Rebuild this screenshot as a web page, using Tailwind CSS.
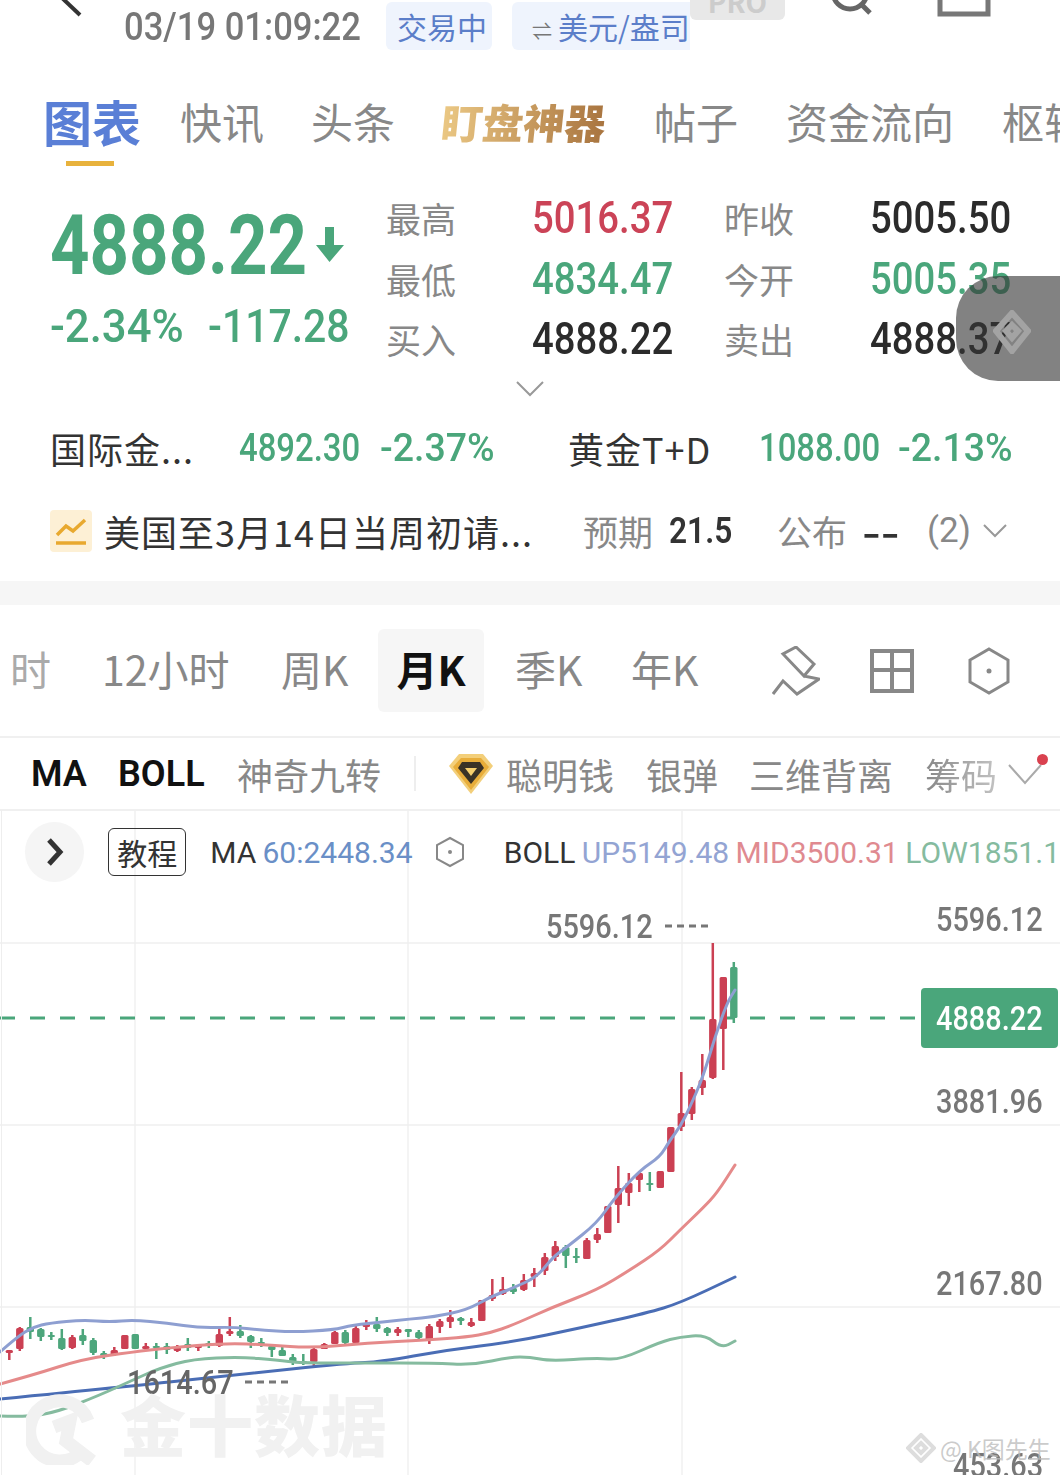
<!DOCTYPE html>
<html lang="zh-CN">
  <head>
    <meta charset="UTF-8" />
    <title>图表</title>
    <script src="https://cdn.jsdelivr.net/npm/@tailwindcss/browser@4"></script>
  </head>
  <body class="bg-white">
    <div class="relative w-[1060px] h-[1475px] overflow-hidden bg-white text-[#888] font-['Noto_Sans_CJK_SC','Noto_Sans',sans-serif]">
      <!-- Top bar -->
      <header class="relative h-[72px]">
        <svg class="absolute left-[50px] top-0" width="40" height="20" fill="none" stroke="#333" stroke-width="4"><path d="M10 -4 L30 15" /></svg>
        <div class="absolute left-[124px] top-[4px] w-[240px] h-[46px] leading-[46px] text-[38px] font-medium text-[#777] font-['Roboto',sans-serif]">
          <span class="inline-block origin-left whitespace-nowrap scale-x-[.91]">03/19 01:09:22</span>
        </div>
        <div class="absolute left-[386px] top-[2px] w-[106px] h-[48px] rounded-md bg-[#eff4fd] text-[#5b7ec9] text-[30px] leading-[48px] pl-[11px]">交易中</div>
        <div class="absolute left-[512px] top-[2px] w-[178px] h-[48px] rounded-l-md bg-[#eff4fd] text-[#5b7ec9] text-[30px] leading-[48px] whitespace-nowrap overflow-hidden pl-[20px]">
          <span class="text-[20px] mr-[6px] text-[#777]">⇌</span>美元/盎司
        </div>
        <div class="absolute left-[690px] top-0 w-[95px] h-[20px] rounded-b-md bg-[#e8e8e8] overflow-hidden text-center text-[#ccc] font-bold text-[28px] leading-[2px]">PRO</div>
        <svg class="absolute left-[820px] top-0" width="60" height="16" fill="none" stroke="#666" stroke-width="5"><circle cx="30" cy="-8" r="17" /><path d="M41 4 L50 13" /></svg>
        <svg class="absolute left-[936px] top-0" width="56" height="18" fill="none" stroke="#777" stroke-width="5"><path d="M4 0 V14 H52 V0" /></svg>
      </header>

      <!-- Tabs -->
      <nav class="relative h-[108px] flex items-start pl-[43px] pt-[16px] text-[42px] leading-[66px] whitespace-nowrap">
        <span class="text-[49px] font-bold text-[#5a7fd6] mr-[39px]">图表</span>
        <span class="mr-[47px]">快讯</span>
        <span class="mr-[47px]">头条</span>
        <span class="mr-[48px] w-[164px] font-black text-[41px] -skew-x-6 bg-linear-to-r from-[#ebc884] to-[#a8743f] bg-clip-text text-transparent">盯盘神器</span>
        <span class="mr-[48px]">帖子</span>
        <span class="mr-[48px]">资金流向</span>
        <span>枢轴</span>
        <i class="absolute left-[66px] top-[89px] w-[48px] h-[5px] bg-[#e8b23c]"></i>
      </nav>

      <!-- Quote -->
      <section class="relative h-[240px] flex pl-[50px]">
        <div class="w-[336px] text-[#4aa67b] font-['Roboto',sans-serif]">
          <div class="flex h-[100px] items-center pt-[32px] relative">
            <span class="inline-block origin-left whitespace-nowrap scale-x-[.82] text-[84px] leading-[100px] font-bold">4888.22</span>
            <svg class="absolute left-[265px] top-[47px]" width="30" height="36" fill="#4aa67b"><path d="M10 0 H19 V18 H29 L14.500 35 L1 18 H10 Z" /></svg>
          </div>
          <div class="flex h-[60px] items-center mt-[16px] text-[46px] font-medium whitespace-nowrap">
            <span class="inline-block w-[158px] origin-left scale-x-[.95]">-2.34%</span>
            <span class="inline-block origin-left scale-x-[.89]">-117.28</span>
          </div>
        </div>
        <div class="grid grid-cols-[146px_192px_146px_146px] auto-rows-[60.500px] pt-[8px] text-[35px] leading-[60px] whitespace-nowrap">
          <span>最高</span>
          <span class="font-['Roboto',sans-serif] font-medium text-[44px] text-[#cb4357]"><span class="inline-block origin-left scale-x-[.87]">5016.37</span></span>
          <span>昨收</span>
          <span class="font-['Roboto',sans-serif] font-medium text-[44px] text-[#2b2b2b]"><span class="inline-block origin-left scale-x-[.87]">5005.50</span></span>
          <span>最低</span>
          <span class="font-['Roboto',sans-serif] font-medium text-[44px] text-[#4aa67b]"><span class="inline-block origin-left scale-x-[.87]">4834.47</span></span>
          <span>今开</span>
          <span class="font-['Roboto',sans-serif] font-medium text-[44px] text-[#4aa67b]"><span class="inline-block origin-left scale-x-[.87]">5005.35</span></span>
          <span>买入</span>
          <span class="font-['Roboto',sans-serif] font-medium text-[44px] text-[#2b2b2b]"><span class="inline-block origin-left scale-x-[.87]">4888.22</span></span>
          <span>卖出</span>
          <span class="font-['Roboto',sans-serif] font-medium text-[44px] text-[#2b2b2b]"><span class="inline-block origin-left scale-x-[.87]">4888.37</span></span>
        </div>
        <svg class="absolute left-[516px] top-[201px]" width="28" height="16" fill="none" stroke="#999" stroke-width="2"><path d="M1 1 L14 14 L27 1" /></svg>
      </section>

      <!-- Related quotes -->
      <section class="h-[60px] flex items-center pl-[50px] mt-[-2px] whitespace-nowrap text-[36px] text-[#333]">
        <span class="w-[189px] tracking-[1px]">国际金...</span>
        <span class="w-[141px] font-['Roboto',sans-serif] font-medium text-[38px] text-[#4aa67b]"><span class="inline-block origin-left scale-x-[.865]">4892.30</span></span>
        <span class="w-[188px] font-['Roboto',sans-serif] font-medium text-[38px] text-[#4aa67b]"><span class="inline-block origin-left scale-x-[.985]">-2.37%</span></span>
        <span class="w-[191px] tracking-[1px]">黄金T+D</span>
        <span class="w-[139px] font-['Roboto',sans-serif] font-medium text-[38px] text-[#4aa67b]"><span class="inline-block origin-left scale-x-[.865]">1088.00</span></span>
        <span class="font-['Roboto',sans-serif] font-medium text-[38px] text-[#4aa67b]"><span class="inline-block origin-left scale-x-[.985]">-2.13%</span></span>
      </section>

      <!-- Calendar item -->
      <section class="h-[60px] mt-[23px] flex items-center pl-[50px] whitespace-nowrap text-[35px] text-[#333]">
        <span class="w-[42px] h-[42px] mr-[12px] bg-[#fdf0d5] rounded-sm flex items-center justify-center">
          <svg width="34" height="30" fill="none" stroke="#e8a92f" stroke-width="3.500"><path d="M3 19 L12 10 L19 15 L31 4" /><path d="M2 27 H32" /></svg>
        </span>
        <span class="w-[479px] text-[36px] tracking-[1px]">美国至3月14日当周初请...</span>
        <span class="w-[86px] text-[#888]">预期</span>
        <span class="w-[108px] font-['Roboto',sans-serif] font-semibold text-[36px]"><span class="inline-block origin-left scale-x-[.88]">21.5</span></span>
        <span class="w-[85px] text-[#888]">公布</span>
        <span class="w-[65px] font-bold"><span class="inline-block origin-left scale-x-[1.45]">--</span></span>
        <span class="w-[56px] text-[#888] font-['Roboto',sans-serif]">(2)</span>
        <svg width="24" height="14" fill="none" stroke="#999" stroke-width="2"><path d="M1 1 L12 12 L23 1" /></svg>
      </section>

      <div class="h-[24px] mt-[20px] bg-[#f6f6f6]"></div>

      <!-- Periods -->
      <section class="relative h-[109px] border-b-2 border-[#f0f0f0] text-[41px] whitespace-nowrap">
        <div class="flex items-center h-[83px] mt-[24px]">
          <span class="w-[102px] pl-[10px] mt-[-4px] text-[#aaa]">时</span>
          <span class="w-[179px] mt-[-4px]">12小时</span>
          <span class="w-[97px] mt-[-4px]">周K</span>
          <span class="w-[106px] h-[83px] leading-[78px] text-center rounded-md bg-[#f6f6f6] font-bold text-[#111] mr-[31px]">月K</span>
          <span class="w-[116px] mt-[-4px]">季K</span>
          <span class="w-[141px] mt-[-4px]">年K</span>
          <svg class="mr-[50px]" width="48" height="50" fill="none" stroke="#888" stroke-width="3"><path d="M24 1 L42 18 L32 30 L11 8 Z M32 30 L47 33 L25 48 L11 35 L1 48" /></svg>
          <svg class="mr-[54px]" width="44" height="44" fill="none" stroke="#888" stroke-width="4"><path d="M2 2 H42 V42 H2 Z M22 2 V42 M2 21 H42" /></svg>
          <svg width="42" height="48" fill="none" stroke="#888" stroke-width="3"><path d="M21 2 L40 13 V35 L21 46 L2 35 V13 Z" /><circle cx="21" cy="24" r="2.500" fill="#888" stroke="none" /></svg>
        </div>
      </section>

      <!-- Indicators -->
      <section class="relative h-[73px] flex items-center whitespace-nowrap text-[36px] border-b-2 border-[#f0f0f0]">
        <span class="ml-[31px] w-[87px] font-['Roboto',sans-serif] font-semibold text-[#111]">MA</span>
        <span class="w-[119px] font-['Roboto',sans-serif] font-semibold text-[#111]">BOLL</span>
        <span class="w-[177px]">神奇九转</span>
        <i class="w-[2px] h-[35px] bg-[#eee] mr-[32px]"></i>
        <svg class="mr-[12px]" width="46" height="42"><path d="M11 1 H35 L45 13 L23 41 L1 13 Z" fill="#f3cf7a" /><path d="M13 5 H33 L41 14 L23 37 L5 14 Z" fill="#e8ad3a" /><path d="M14 9 H32 L36 15 L23 31 L10 15 Z" fill="#3a3226" /><path d="M17 15 H29 L23 23 Z" fill="#f6cf6e" /></svg>
        <span class="w-[140px]">聪明钱</span>
        <span class="w-[103px]">银弹</span>
        <span class="w-[176px]">三维背离</span>
        <span class="w-[83px] bg-linear-to-r from-[#888] to-[#ccc] bg-clip-text text-transparent">筹码</span>
        <svg width="34" height="22" fill="none" stroke="#aaa" stroke-width="2"><path d="M1 2 L17 20 L33 2" /></svg>
        <i class="absolute left-[1037px] top-[16px] w-[11px] h-[11px] rounded-full bg-[#d9414f]"></i>
      </section>

      <!-- Chart -->
      <section class="relative h-[665px]">
        <svg id="chart" class="absolute inset-0" width="1060" height="665" viewBox="0 811 1060 665" fill="none"></svg>

        <div class="absolute left-[1px] top-[-1px] w-px h-[665px] bg-[#eee]"></div>

        <div class="relative flex items-center h-[82px] whitespace-nowrap text-[30px] font-['Roboto',sans-serif]">
          <span class="ml-[25px] mr-[24px] w-[60px] h-[60px] rounded-full bg-[#f5f5f5] flex items-center justify-center">
            <svg width="20" height="30" fill="none" stroke="#333" stroke-width="5"><path d="M4 3 L15 15 L4 27" /></svg>
          </span>
          <span class="w-[79px] h-[48px] mr-[24px] border border-[#333] rounded-md text-[#333] text-center leading-[46px] font-['Noto_Sans_CJK_SC',sans-serif]">教程</span>
          <span class="w-[53px] text-[#333]">MA</span>
          <span class="w-[175px] text-[#6a8fc7]">60:2448.34</span>
          <svg class="mr-[39px]" width="30" height="32" fill="none" stroke="#888" stroke-width="2"><path d="M15 2 L28 9 V23 L15 30 L2 23 V9 Z" /><circle cx="15" cy="16" r="2" fill="#888" stroke="none" /></svg>
          <span class="w-[79px] text-[#333]">BOLL</span>
          <span class="w-[156px] text-[#93a4d3]">UP5149.48</span>
          <span class="w-[172px] text-[#e08a90]">MID3500.31</span>
          <span class="text-[#85bb9f]">LOW1851.1</span>
        </div>

        <!-- Price labels -->
        <div class="absolute left-[936px] top-[88px] text-[34px] leading-[40px] font-['Roboto',sans-serif] font-medium text-[#777]"><span class="inline-block origin-left scale-x-[.85]">5596.12</span></div>
        <div class="absolute left-[546px] top-[95px] text-[34px] leading-[40px] font-['Roboto',sans-serif] font-medium text-[#777] whitespace-nowrap"><span class="inline-block origin-left scale-x-[.85]">5596.12</span></div>
        <div class="absolute left-[921px] top-[177px] w-[137px] h-[60px] rounded-sm bg-[#4aa67b] text-white text-[34px] leading-[60px] pl-[15px] font-['Roboto',sans-serif] font-medium"><span class="inline-block origin-left scale-x-[.85]">4888.22</span></div>
        <div class="absolute left-[936px] top-[270px] text-[34px] leading-[40px] font-['Roboto',sans-serif] font-medium text-[#777]"><span class="inline-block origin-left scale-x-[.85]">3881.96</span></div>
        <div class="absolute left-[936px] top-[452px] text-[34px] leading-[40px] font-['Roboto',sans-serif] font-medium text-[#777]"><span class="inline-block origin-left scale-x-[.85]">2167.80</span></div>
        <div class="absolute left-[127px] top-[551px] text-[34px] leading-[40px] font-['Roboto',sans-serif] font-medium text-[#666]"><span class="inline-block origin-left scale-x-[.85]">1614.67</span></div>
        <div class="absolute left-[953px] top-[634px] text-[34px] leading-[40px] font-['Roboto',sans-serif] font-medium text-[#777]"><span class="inline-block origin-left scale-x-[.85]">453.63</span></div>

        <!-- Watermarks -->
        <svg class="absolute left-[26px] top-[580px]" width="74" height="74" fill="none" stroke="#f1f1f1" stroke-width="13"><path d="M56 60 A30 30 0 1 1 62 30 M28 36 L44 30 L40 50 L66 70" /></svg>
        <div class="absolute left-[120px] top-[573px] text-[66px] leading-[76px] font-black tracking-[1px] text-[#f1f1f1] whitespace-nowrap">金十数据</div>
        <div class="absolute left-[906px] top-[620px] flex items-center gap-[4px] whitespace-nowrap text-[23px] leading-[34px] text-[#bdbdbd]/80">
          <svg width="30" height="30" fill="none" stroke="#ddd" stroke-width="4"><path d="M15 2 L28 15 L15 28 L2 15 Z M15 10 L20 15 L15 20 L10 15 Z" /></svg>
          <span>@ K图先生</span>
        </div>
      </section>

      <!-- Floating button -->
      <div class="absolute left-[956px] top-[276px] w-[104px] h-[105px] rounded-l-[42px] bg-[#353535]/62 flex items-center pl-[37px] pt-[7px]">
        <svg width="38" height="44" fill="none" stroke="#a3a3a3" stroke-width="6"><path d="M19 3 L35 21 L19 41 L3 21 Z M19 15 L25 21 L19 28 L13 21 Z" /></svg>
      </div>
    </div>

    <script>
      // [wick top, wick bottom, body top, body bottom, up?]
      const R = 1, G = 0;
      const candles = [
        [1350,1360,1350,1353,R],[1327,1351,1328,1349,R],[1317,1339,1327,1332,G],[1328,1341,1329,1337,G],[1332,1340,1335,1337,G],
        [1329,1350,1338,1349,G],[1335,1349,1337,1348,R],[1329,1345,1335,1341,G],[1338,1355,1340,1353,G],[1351,1359,1353,1356,G],
        [1347,1356,1350,1355,R],[1335,1349,1335,1349,R],[1334,1349,1334,1349,G],[1343,1350,1346,1349,R],[1343,1359,1346,1348,G],
        [1343,1354,1346,1350,G],[1345,1352,1347,1351,R],[1338,1351,1344,1348,G],[1344,1351,1345,1348,R],[1341,1348,1343,1346,G],
        [1328,1347,1334,1346,R],[1317,1336,1331,1334,R],[1325,1338,1331,1336,G],[1335,1348,1336,1342,G],[1338,1347,1342,1344,G],
        [1345,1357,1346,1350,G],[1347,1356,1350,1356,G],[1354,1365,1357,1362,G],[1354,1365,1361,1363,G],[1348,1367,1349,1362,R],
        [1343,1349,1344,1349,R],[1331,1344,1332,1344,R],[1330,1344,1332,1343,G],[1325,1343,1328,1343,R],[1320,1330,1323,1327,R],
        [1317,1332,1324,1329,G],[1327,1336,1328,1333,G],[1327,1336,1329,1333,R],[1329,1337,1329,1332,G],[1330,1339,1332,1338,G],
        [1324,1344,1326,1340,R],[1319,1333,1321,1327,R],[1310,1328,1317,1322,R],[1317,1325,1318,1321,G],[1318,1327,1322,1326,R],
        [1300,1321,1300,1321,R],[1279,1301,1295,1299,R],[1277,1295,1289,1294,R],[1284,1294,1288,1292,G],[1274,1291,1280,1290,R],
        [1268,1287,1273,1277,R],[1253,1275,1257,1271,R],[1241,1261,1246,1257,R],[1245,1268,1247,1256,G],[1248,1263,1256,1258,G],
        [1238,1259,1240,1259,R],[1228,1243,1234,1240,R],[1206,1233,1206,1233,R],[1166,1223,1188,1205,R],[1173,1206,1183,1193,R],
        [1171,1192,1173,1180,R],[1172,1191,1183,1185,G],[1171,1188,1171,1188,R],[1127,1172,1127,1172,R],[1072,1131,1113,1127,R],
        [1087,1120,1089,1114,R],[1054,1095,1080,1088,R],[943,1079,1019,1078,R],[977,1070,977,1029,R],[962,1023,967,1018,G],
      ];
      const lines = {
        "#e58a8a": "0,1384 33,1375 83,1359 133,1352 167,1348 227,1343 267,1345 313,1348 367,1343 427,1340 467,1337 490,1333 513,1325 553,1307 597,1290 630,1270 660,1250 680,1230 703,1208 717,1193 735,1165",
        "#4a6db5": "0,1399 133,1386 233,1375 350,1363 380,1362 447,1350 513,1342 580,1328 647,1313 680,1303 735,1277",
        "#85bb9f": "0,1416 27,1417 57,1412 100,1395 133,1380 160,1368 193,1359 240,1357 277,1360 300,1363 367,1363 433,1363 473,1365 510,1357 530,1357 550,1361 597,1358 620,1360 660,1342 680,1337 705,1335 722,1348 735,1341",
      };
      const upper = "0,1352 17,1337 33,1327 50,1323 83,1320 110,1322 133,1320 167,1323 200,1328 233,1327 260,1330 293,1332 333,1330 353,1325 383,1322 410,1319 433,1317 467,1310 490,1297 513,1288 537,1277 553,1257 567,1247 597,1223 613,1200 640,1170 660,1157 670,1140 680,1127 690,1107 703,1077 715,1037 727,1003 735,990";

      // round the corners of a point list with quadratic curves through the midpoints
      const smooth = (s) => {
        const p = s.split(" ").map((q) => q.split(",").map(Number));
        let d = `M${p[0][0]} ${p[0][1]}`;
        for (let i = 1; i < p.length - 1; i++) {
          d += ` Q${p[i][0]} ${p[i][1]} ${(p[i][0] + p[i + 1][0]) / 2} ${(p[i][1] + p[i + 1][1]) / 2}`;
        }
        const e = p[p.length - 1];
        return d + ` L${e[0]} ${e[1]}`;
      };

      let svg = "";
      [135, 408, 682].forEach((x) => (svg += `<path d="M${x} 811 V1475" stroke="#f0f0f0" stroke-width="1.500"/>`));
      [943, 1125, 1307].forEach((y) => (svg += `<path d="M0 ${y} H1060" stroke="#efefef" stroke-width="1.500"/>`));
      svg += `<path d="M0 1018 H921" stroke="#4aa67b" stroke-width="3" stroke-dasharray="15 15"/>`;
      svg += `<path d="M665 926 H708" stroke="#777" stroke-width="3" stroke-dasharray="7 5"/>`;
      svg += `<path d="M245 1382 H288" stroke="#777" stroke-width="3" stroke-dasharray="7 5"/>`;
      candles.forEach((c, i) => {
        const x = 9.3 + 10.5 * i;
        const col = c[4] ? "#cb4053" : "#4da67c";
        svg += `<path d="M${x} ${c[0]} V${c[1]}" stroke="${col}" stroke-width="2.500"/>`;
        svg += `<rect x="${x - 3.7}" y="${c[2]}" width="7.4" height="${Math.max(c[3] - c[2], 2)}" rx="1.500" fill="${col}"/>`;
      });
      for (const col in lines) {
        svg += `<path d="${smooth(lines[col])}" stroke="${col}" stroke-width="3" stroke-linecap="round"/>`;
      }
      svg += `<path d="${smooth(upper)}" stroke="#8e9fd1" stroke-width="3" stroke-linecap="round"/>`;
      document.getElementById("chart").innerHTML = svg;
    </script>
  </body>
</html>
